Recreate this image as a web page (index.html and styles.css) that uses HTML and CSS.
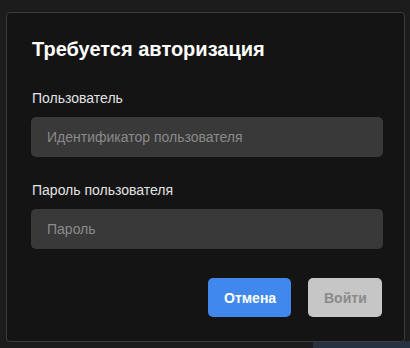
FILE: index.html
```html
<!DOCTYPE html>
<html lang="ru">
<head>
<meta charset="utf-8">
<link rel="stylesheet" href="styles.css">
</head>
<body>
<div class="dialog">
  <h1 class="title">Требуется авторизация</h1>
  <div class="field">
    <label class="label">Пользователь</label>
    <div class="input placeholder">Идентификатор пользователя</div>
  </div>
  <div class="field">
    <label class="label">Пароль пользователя</label>
    <div class="input placeholder">Пароль</div>
  </div>
  <div class="actions">
    <button class="btn btn-primary">Отмена</button>
    <button class="btn btn-disabled">Войти</button>
  </div>
</div>
</body>
</html>
```
FILE: styles.css
```css
html, body {
  margin: 0;
  padding: 0;
  font-family: "Liberation Sans", Arial, sans-serif;
}
html {
  background: #1c1c1c;
}
body {
  width: 410px;
  height: 348px;
  overflow: hidden;
  padding-top: 12px;
  padding-left: 6px;
  box-sizing: border-box;
  background:
    linear-gradient(to right, #1c1c1c 313px, #283140 313px) left bottom / 100% 7px no-repeat,
    #1c1c1c;
}
.dialog {
  box-sizing: border-box;
  width: 399px;
  height: 330px;
  background: #141414;
  border: 1px solid #3b3b3b;
  border-radius: 4px;
  padding: 25px 21px 0 24px;
  display: flex;
  flex-direction: column;
}
.title {
  margin: 0;
  font-size: 20px;
  line-height: 23px;
  font-weight: bold;
  color: #ffffff;
  padding-left: 1px;
}
.field {
  display: flex;
  flex-direction: column;
  gap: 11px;
  margin-top: 29px;
}
.field + .field {
  margin-top: 25px;
}
.label {
  font-size: 14px;
  line-height: 16px;
  color: #e2e2e2;
  padding-left: 1px;
}
.input {
  height: 40px;
  box-sizing: border-box;
  background: #393939;
  border-radius: 5px;
  padding: 0 16px;
  display: flex;
  align-items: center;
  font-size: 14px;
}
.placeholder {
  color: #8a8a8a;
}
.actions {
  display: flex;
  justify-content: flex-end;
  gap: 17px;
  margin-top: 29px;
  padding-right: 1px;
}
.btn {
  height: 39px;
  border: none;
  border-radius: 5px;
  font-family: "Liberation Sans", Arial, sans-serif;
  font-size: 14px;
  font-weight: bold;
  padding: 0 16px;
}
.btn-primary {
  background: #4088ec;
  color: #ffffff;
  width: 83px;
}
.btn-disabled {
  background: #c6c6c6;
  color: #8a8a8a;
  width: 74px;
}
```
